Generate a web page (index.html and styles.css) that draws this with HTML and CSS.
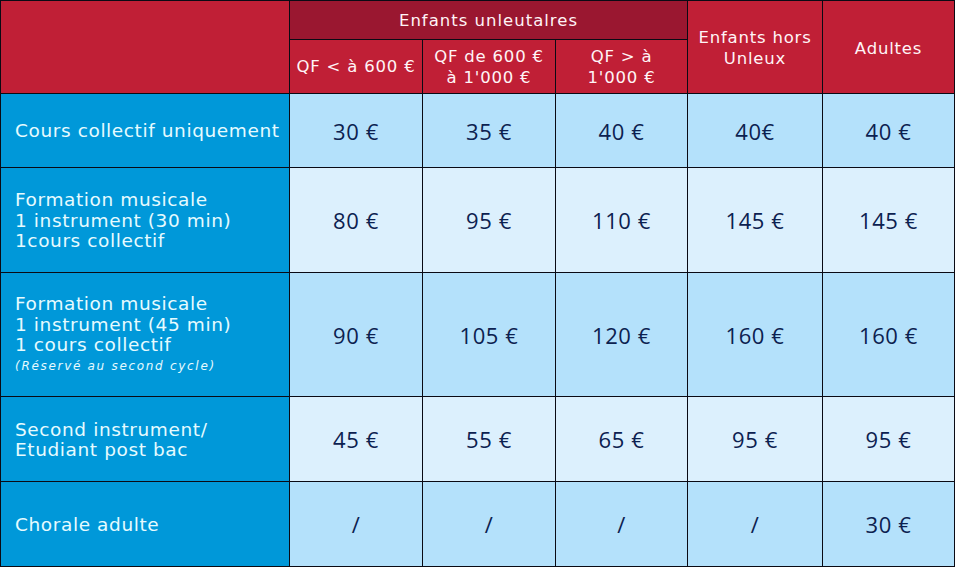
FILE: index.html
```html
<!DOCTYPE html>
<html lang="fr">
<head>
<meta charset="utf-8">
<link rel="stylesheet" href="styles.css">
<title>Tarifs</title>
</head>
<body>
<div class="grid">
  <div class="h corner"></div>
  <div class="h band">Enfants unleutalres</div>
  <div class="h hors">Enfants hors<br>Unleux</div>
  <div class="h adultes">Adultes</div>
  <div class="h sub">QF &lt; à 600 €</div>
  <div class="h sub">QF de 600 €<br>à 1'000 €</div>
  <div class="h sub">QF &gt; à<br>1'000 €</div>

  <div class="lbl">Cours collectif uniquement</div>
  <div class="c a">30 €</div><div class="c a">35 €</div><div class="c a">40 €</div><div class="c a">40€</div><div class="c a">40 €</div>

  <div class="lbl">Formation musicale<br>1 instrument (30 min)<br>1cours collectif</div>
  <div class="c b">80 €</div><div class="c b">95 €</div><div class="c b">110 €</div><div class="c b">145 €</div><div class="c b">145 €</div>

  <div class="lbl">Formation musicale<br>1 instrument (45 min)<br>1 cours collectif<br><span class="note">(Réservé au second cycle)</span></div>
  <div class="c a">90 €</div><div class="c a">105 €</div><div class="c a">120 €</div><div class="c a">160 €</div><div class="c a">160 €</div>

  <div class="lbl">Second instrument/<br>Etudiant post bac</div>
  <div class="c b">45 €</div><div class="c b">55 €</div><div class="c b">65 €</div><div class="c b">95 €</div><div class="c b">95 €</div>

  <div class="lbl">Chorale adulte</div>
  <div class="c a">/</div><div class="c a">/</div><div class="c a">/</div><div class="c a">/</div><div class="c a">30 €</div>
</div>
</body>
</html>
```
FILE: styles.css
```css
html, body { margin: 0; padding: 0; background: #fff; }
.grid {
  display: grid;
  grid-template-columns: 288px 132px 132px 131px 134px 131px;
  grid-template-rows: 38px 53px 73px 104px 123px 84px 84px;
  gap: 1px;
  padding: 1px;
  background: #0a0a14;
  width: 953px;
  font-family: "DejaVu Sans", sans-serif;
}
.h {
  background: #c01f36;
  color: #fff4f6;
  display: flex;
  align-items: center;
  justify-content: center;
  text-align: center;
  font-size: 16.5px;
  line-height: 21px;
  letter-spacing: 0.8px;
}
.corner { grid-column: 1; grid-row: 1 / 3; }
.band { grid-column: 2 / 5; grid-row: 1; background: #9a1730; letter-spacing: 1px; }
.hors { grid-column: 5; grid-row: 1 / 3; padding-top: 2px; }
.adultes { grid-column: 6; grid-row: 1 / 3; padding-top: 2px; }
.sub { grid-row: 2; }
.lbl {
  background: #0098d9;
  color: #e6fbff;
  display: grid;
  align-content: center;
  padding-left: 14px;
  padding-top: 2px;
  font-size: 18.5px;
  line-height: 20.5px;
  letter-spacing: 0.6px;
}
.note { font-size: 12px; font-style: italic; line-height: 21px; letter-spacing: 1.7px; }
.c {
  display: flex;
  align-items: center;
  justify-content: center;
  color: #0c2150;
  font-family: "Open Sans", sans-serif;
  font-size: 22px;
  letter-spacing: 0.6px;
}
.a { background: #b4e1fb; }
.b { background: #dcf0fd; }
```
